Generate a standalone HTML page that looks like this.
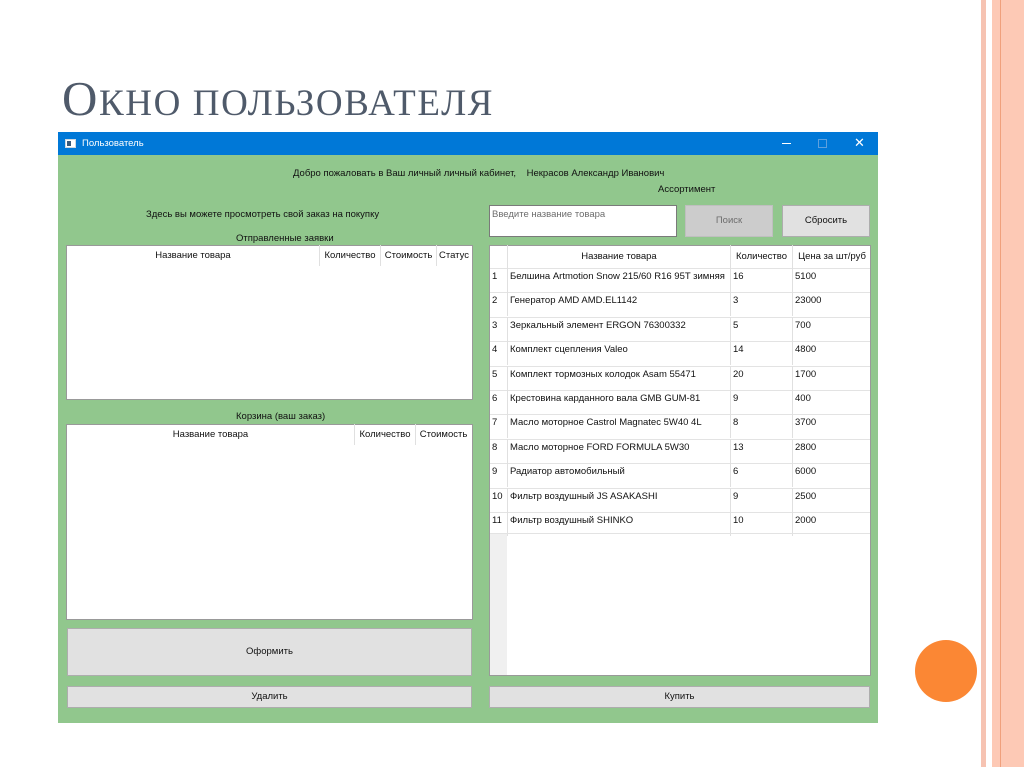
<!DOCTYPE html>
<html><head><meta charset="utf-8"><style>
*{margin:0;padding:0;box-sizing:border-box}
body{width:1024px;height:767px;background:#fff;position:relative;overflow:hidden;font-family:"Liberation Sans","DejaVu Sans",sans-serif;}
.a{position:absolute}
.t{font-size:9.5px;color:#111;white-space:nowrap}
.title{left:62px;top:70px;font-family:"Liberation Serif",serif;color:#4f5a6a;font-size:37px;letter-spacing:1.6px;white-space:nowrap}
.title b{font-weight:normal;font-size:49px}
.tbl{background:#fff;border:1px solid #999}
.cell{position:absolute;font-size:9.5px;color:#111;white-space:nowrap;line-height:23px}
.btn{position:absolute;background:#e1e1e1;border:1px solid #adadad;font-size:9.5px;text-align:center;color:#111}
</style></head><body>
<div class="a title"><b>О</b>КНО ПОЛЬЗОВАТЕЛЯ</div>
<div class="a" style="left:981px;top:0;width:5px;height:767px;background:#f6c3b2"></div>
<div class="a" style="left:992px;top:0;width:32px;height:767px;background:#fdc9b5"></div>
<div class="a" style="left:1000px;top:0;width:1px;height:767px;background:#f0a07c"></div>
<div class="a" style="left:915px;top:640px;width:62px;height:62px;border-radius:50%;background:#fb8734"></div>

<div class="a" style="left:58px;top:132px;width:820px;height:591px;background:#91c78d"></div>
<div class="a" style="left:58px;top:132px;width:820px;height:23px;background:#0078d7"></div>
<div class="a" style="left:65px;top:139px;width:11px;height:9px;background:#fff;border:1px solid #cfd8e0"><div style="margin:1px;width:4px;height:5px;background:#3a5a7a"></div></div>
<div class="a t" style="left:82px;top:138px;color:#fff">Пользователь</div>
<div class="a" style="left:782px;top:143px;width:9px;height:1px;background:#fff"></div>
<div class="a" style="left:818px;top:139px;width:9px;height:9px;border:1px solid #5ea0dd"></div>
<div class="a t" style="left:854px;top:135px;color:#fff;font-size:13px">✕</div>

<div class="a t" style="left:293px;top:168px">Добро пожаловать в Ваш личный личный кабинет,&nbsp;&nbsp;&nbsp; Некрасов Александр Иванович</div>
<div class="a t" style="left:658px;top:184px">Ассортимент</div>
<div class="a t" style="left:146px;top:209px">Здесь вы можете просмотреть свой заказ на покупку</div>
<div class="a t" style="left:236px;top:233px">Отправленные заявки</div>
<div class="a t" style="left:236px;top:411px">Корзина (ваш заказ)</div>

<div class="a tbl" style="left:66px;top:245px;width:407px;height:155px"></div>
<div class="cell" style="left:67px;top:245px;width:252px;text-align:center;line-height:21px">Название товара</div>
<div class="cell" style="left:319px;top:245px;width:61px;text-align:center;line-height:21px;border-left:1px solid #e0e0e0">Количество</div>
<div class="cell" style="left:380px;top:245px;width:56px;text-align:center;line-height:21px;border-left:1px solid #e0e0e0">Стоимость</div>
<div class="cell" style="left:436px;top:245px;width:35px;text-align:center;line-height:21px;border-left:1px solid #e0e0e0">Статус</div>

<div class="a tbl" style="left:66px;top:424px;width:407px;height:196px"></div>
<div class="cell" style="left:67px;top:424px;width:287px;text-align:center;line-height:21px">Название товара</div>
<div class="cell" style="left:354px;top:424px;width:61px;text-align:center;line-height:21px;border-left:1px solid #e0e0e0">Количество</div>
<div class="cell" style="left:415px;top:424px;width:56px;text-align:center;line-height:21px;border-left:1px solid #e0e0e0">Стоимость</div>

<div class="btn" style="left:67px;top:628px;width:405px;height:48px;line-height:46px">Оформить</div>
<div class="btn" style="left:67px;top:686px;width:405px;height:22px;line-height:20px">Удалить</div>
<div class="btn" style="left:489px;top:686px;width:381px;height:22px;line-height:20px">Купить</div>

<div class="a" style="left:489px;top:205px;width:188px;height:32px;background:#fff;border:1px solid #7a7a7a"></div>
<div class="a t" style="left:492px;top:209px;color:#6d6d6d">Введите название товара</div>
<div class="btn" style="left:685px;top:205px;width:88px;height:32px;line-height:30px;background:#cccccc;border-color:#bfbfbf;color:#6d6d6d">Поиск</div>
<div class="btn" style="left:782px;top:205px;width:88px;height:32px;line-height:30px">Сбросить</div>

<div class="a tbl" style="left:489px;top:245px;width:382px;height:431px;background:#fff"></div>
<div class="a" style="left:490px;top:533px;width:17px;height:142px;background:#f0f0f0"></div>
<div id="rt"></div>
<script>
var rows=[["Белшина Artmotion Snow 215/60 R16 95T зимняя","16","5100"],["Генератор AMD AMD.EL1142","3","23000"],["Зеркальный элемент ERGON 76300332","5","700"],["Комплект сцепления Valeo","14","4800"],["Комплект тормозных колодок Asam 55471","20","1700"],["Крестовина карданного вала GMB GUM-81","9","400"],["Масло моторное Castrol Magnatec 5W40 4L","8","3700"],["Масло моторное FORD FORMULA 5W30","13","2800"],["Радиатор автомобильный","6","6000"],["Фильтр воздушный JS ASAKASHI","9","2500"],["Фильтр воздушный SHINKO","10","2000"]];
var h='';
h+='<div class="cell" style="left:507px;top:245px;width:223px;text-align:center;border-left:1px solid #e0e0e0">Название товара</div>';
h+='<div class="cell" style="left:730px;top:245px;width:62px;text-align:center;border-left:1px solid #e0e0e0">Количество</div>';
h+='<div class="cell" style="left:792px;top:245px;width:79px;text-align:center;border-left:1px solid #e0e0e0">Цена за шт/руб</div>';
for(var i=0;i<rows.length;i++){var y=268+i*24.4;
h+='<div class="a" style="left:490px;top:'+y+'px;width:380px;height:1px;background:#e3e3e3"></div>';
h+='<div class="cell" style="left:492px;top:'+(y-3)+'px;line-height:24px">'+(i+1)+'</div>';
h+='<div class="a" style="left:507px;top:'+y+'px;width:1px;height:24px;background:#e0e0e0"></div>';
h+='<div class="a" style="left:730px;top:'+y+'px;width:1px;height:24px;background:#e0e0e0"></div>';
h+='<div class="a" style="left:792px;top:'+y+'px;width:1px;height:24px;background:#e0e0e0"></div>';
h+='<div class="cell" style="left:510px;top:'+(y-3)+'px;line-height:24px">'+rows[i][0]+'</div>';
h+='<div class="cell" style="left:733px;top:'+(y-3)+'px;line-height:24px">'+rows[i][1]+'</div>';
h+='<div class="cell" style="left:795px;top:'+(y-3)+'px;line-height:24px">'+rows[i][2]+'</div>';}
h+='<div class="a" style="left:490px;top:533px;width:380px;height:1px;background:#e3e3e3"></div>';
document.getElementById('rt').innerHTML=h;
</script>
</body></html>
